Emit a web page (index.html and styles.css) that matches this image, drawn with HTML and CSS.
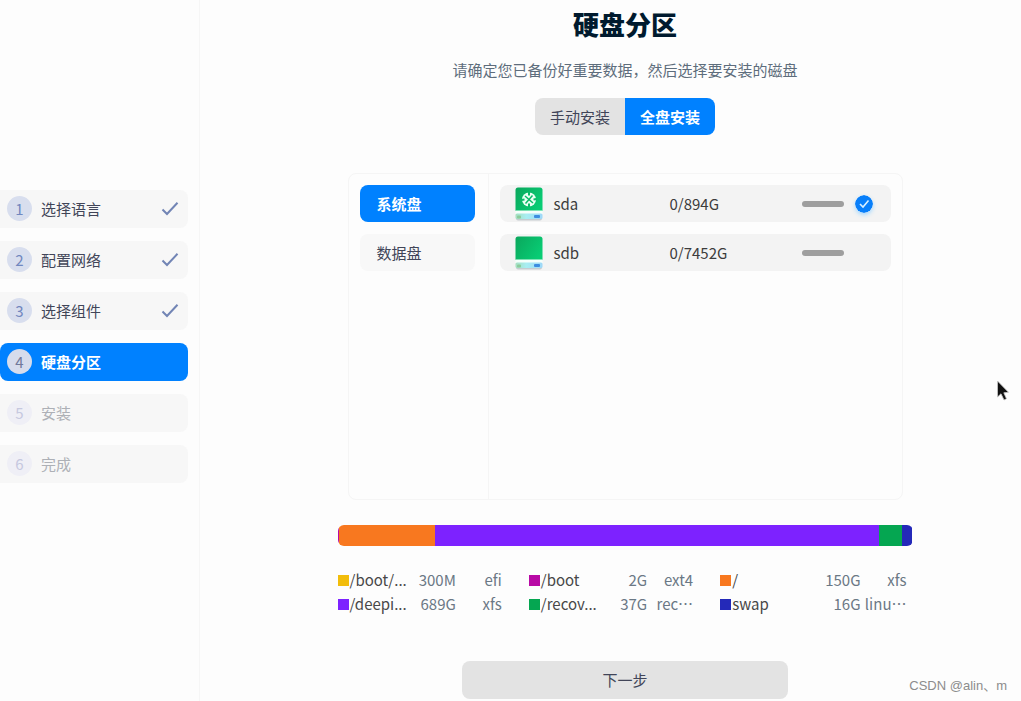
FILE: index.html
```html
<!DOCTYPE html>
<html lang="zh-CN">
<head>
<meta charset="utf-8">
<meta name="viewport" content="width=device-width, initial-scale=1">
<title>硬盘分区</title>
<link rel="stylesheet" href="styles.css">
</head>
<body>
<div class="installer">
  <nav class="sidebar" aria-label="安装步骤">
    <ol class="steps">
      <li class="step step-done"><span class="step-number">1</span><span class="step-label">选择语言</span><svg class="step-tick" viewBox="0 0 18 16" aria-hidden="true"><path d="M1.500 8.500 L6 13 L16.500 1.800"/></svg></li>
      <li class="step step-done"><span class="step-number">2</span><span class="step-label">配置网络</span><svg class="step-tick" viewBox="0 0 18 16" aria-hidden="true"><path d="M1.500 8.500 L6 13 L16.500 1.800"/></svg></li>
      <li class="step step-done"><span class="step-number">3</span><span class="step-label">选择组件</span><svg class="step-tick" viewBox="0 0 18 16" aria-hidden="true"><path d="M1.500 8.500 L6 13 L16.500 1.800"/></svg></li>
      <li class="step step-current" aria-current="step"><span class="step-number">4</span><span class="step-label">硬盘分区</span></li>
      <li class="step step-pending"><span class="step-number">5</span><span class="step-label">安装</span></li>
      <li class="step step-pending"><span class="step-number">6</span><span class="step-label">完成</span></li>
    </ol>
  </nav>

  <main class="content">
    <h1 class="title">硬盘分区</h1>
    <p class="subtitle">请确定您已备份好重要数据，然后选择要安装的磁盘</p>
    <div class="mode-switch">
      <button class="mode" type="button" aria-pressed="false">手动安装</button>
      <button class="mode mode-active" type="button" aria-pressed="true">全盘安装</button>
    </div>

    <section class="disk-panel">
      <div class="disk-kinds">
        <button class="kind kind-active" type="button">系统盘</button>
        <button class="kind" type="button">数据盘</button>
      </div>
      <div class="disk-list">
        <button class="disk" type="button" aria-pressed="true">
          <svg class="disk-icon" viewBox="0 0 28 34" aria-hidden="true">
            <defs>
              <linearGradient id="case" x1="0" y1="0" x2="1" y2="0.6"><stop offset="0" stop-color="#0aa75c"/><stop offset="1" stop-color="#08cc74"/></linearGradient>
              <linearGradient id="base" x1="0" y1="0" x2="1" y2="0"><stop offset="0" stop-color="#a5dfc0"/><stop offset="0.4" stop-color="#a8eef2"/><stop offset="1" stop-color="#9ed8f8"/></linearGradient>
            </defs>
            <rect x="1" y="27" width="26" height="6.500" rx="2" fill="#c5ccd0"/>
            <path d="M3 0.500 H25 Q27.500 0.500 27.500 3 V24 H0.500 V3 Q0.500 0.500 3 0.500Z" fill="url(#case)"/>
            <rect x="0.500" y="23.500" width="27" height="3.500" fill="#f5fffb"/>
            <rect x="0.500" y="26.500" width="27" height="5.500" rx="1.500" fill="url(#base)"/>
            <rect x="2" y="28.500" width="4" height="3" rx="1" fill="#8ccb9a"/>
            <rect x="19" y="28" width="6" height="3" rx="1" fill="#3d8de0"/>
            <circle cx="14" cy="12.500" r="7" fill="#e9fff3"/>
            <path d="M10 9 L18 16 M17.500 8.500 L10.500 16.500" stroke="#0abb68" stroke-width="1.500"/>
            <path d="M14 5 V8.500 M14 16.500 V20 M6.500 13 L9.500 12.500 M18.500 12.500 L21.500 12" stroke="#0abb68" stroke-width="2"/>
          </svg>
          <span class="disk-name">sda</span>
          <span class="disk-size">0/894G</span>
          <span class="disk-usage"></span>
          <svg class="disk-check" viewBox="0 0 18 18" aria-hidden="true"><circle cx="9" cy="9" r="9" fill="#087ffa"/><path d="M5 9 L8 12 L13.500 5.500" fill="none" stroke="#d9f0ff" stroke-width="1.600"/></svg>
        </button>
        <button class="disk" type="button" aria-pressed="false">
          <svg class="disk-icon" viewBox="0 0 28 34" aria-hidden="true">
            <rect x="1" y="27" width="26" height="6.500" rx="2" fill="#c5ccd0"/>
            <path d="M3 0.500 H25 Q27.500 0.500 27.500 3 V24 H0.500 V3 Q0.500 0.500 3 0.500Z" fill="url(#case)"/>
            <rect x="0.500" y="23.500" width="27" height="3.500" fill="#f5fffb"/>
            <rect x="0.500" y="26.500" width="27" height="5.500" rx="1.500" fill="url(#base)"/>
            <rect x="2" y="28.500" width="4" height="3" rx="1" fill="#8ccb9a"/>
            <rect x="19" y="28" width="6" height="3" rx="1" fill="#3d8de0"/>
          </svg>
          <span class="disk-name">sdb</span>
          <span class="disk-size">0/7452G</span>
          <span class="disk-usage"></span>
        </button>
      </div>
    </section>

    <div class="partition-bar">
      <span class="magenta" style="width:0.3%"></span>
      <span class="orange" style="width:16.7%"></span>
      <span class="purple" style="width:77.1%"></span>
      <span class="green" style="width:4.1%"></span>
      <span class="blue" style="width:1.8%"></span>
    </div>
    <ul class="legend">
      <li class="part"><i class="swatch yellow"></i><span class="part-name">/boot/...</span><span class="part-size">300M</span><span class="part-type">efi</span></li>
      <li class="part"><i class="swatch magenta"></i><span class="part-name">/boot</span><span class="part-size">2G</span><span class="part-type">ext4</span></li>
      <li class="part"><i class="swatch orange"></i><span class="part-name">/</span><span class="part-size">150G</span><span class="part-type">xfs</span></li>
      <li class="part"><i class="swatch purple"></i><span class="part-name">/deepi...</span><span class="part-size">689G</span><span class="part-type">xfs</span></li>
      <li class="part"><i class="swatch green"></i><span class="part-name">/recov...</span><span class="part-size">37G</span><span class="part-type">rec⋯</span></li>
      <li class="part"><i class="swatch blue"></i><span class="part-name">swap</span><span class="part-size">16G</span><span class="part-type">linu⋯</span></li>
    </ul>
    <button class="next" type="button">下一步</button>
  </main>
</div>
<svg class="pointer" viewBox="0 0 14 22" aria-hidden="true"><path d="M1.500 1 V17 L5 13.800 L8 20 L10.500 18.800 L7.800 12.800 L12.500 12.300Z" fill="#111" stroke="#c8c8c8" stroke-width="0.800"/></svg>
<span class="watermark">CSDN @alin、m</span>
</body>
</html>
```

FILE: styles.css
```css
* {
  box-sizing: border-box;
}

body {
  margin: 0;
  background: #fdfdfd;
  color: #414558;
  font: 15px/22px "Noto Sans CJK SC", sans-serif;
}

button {
  margin: 0;
  padding: 0;
  border: 0;
  color: inherit;
  font: inherit;
  cursor: pointer;
}

.installer {
  display: grid;
  grid-template-columns: 200px 1fr;
  min-height: 100vh;
}

/* Steps */
.sidebar {
  display: flex;
  flex-direction: column;
  justify-content: center;
  padding: 0 11px 29px 0;
  border-right: 1px solid #f6f6f6;
}

.steps {
  display: grid;
  gap: 13px;
  margin: 0;
  padding: 0;
  list-style: none;
}

.step {
  display: flex;
  align-items: center;
  gap: 9px;
  height: 38px;
  padding: 0 9px 0 7px;
  border-radius: 0 8px 8px 0;
  background: #f7f7f7;
}

.step-number {
  width: 25px;
  height: 25px;
  border-radius: 50%;
  background: #d8deee;
  color: #7187bf;
  line-height: 25px;
  text-align: center;
}

.step-label {
  flex: 1;
}

.step-tick {
  width: 18px;
  height: 16px;
  fill: none;
  stroke: #7285b5;
  stroke-width: 2;
}

.step-current {
  border-radius: 8px;
  background: #0081ff;
  color: #fff;
  font-weight: 700;
}

.step-current .step-number {
  background: #d6dcec;
  color: #71799a;
  font-weight: 400;
}

.step-pending {
  color: #adb0b6;
}

.step-pending .step-number {
  background: #efeff6;
  color: #c6c8df;
}

/* Main column */
.content {
  display: flex;
  flex-direction: column;
  align-items: center;
  padding: 5px 0 2px 29px;
}

.title {
  margin: 0;
  color: #001a2e;
  font-size: 26px;
  line-height: 38px;
  font-weight: 900;
}

.subtitle {
  margin: 16px 0 17px;
  color: #5e6d7c;
}

.mode-switch {
  display: grid;
  grid-template-columns: 1fr 1fr;
  width: 180px;
  height: 37px;
  border-radius: 8px;
  overflow: hidden;
}

.mode {
  background: #e3e3e3;
}

.mode-active {
  background: #0081ff;
  color: #fff;
  font-weight: 700;
}

/* Disk selection */
.disk-panel {
  display: grid;
  grid-template-columns: 140px 1fr;
  flex: 1;
  width: 100%;
  max-width: 555px;
  margin-top: 38px;
  border: 1px solid #f5f5f5;
  border-radius: 8px;
}

.disk-kinds,
.disk-list {
  display: grid;
  align-content: start;
  gap: 12px;
  padding: 11px;
}

.disk-kinds {
  padding-right: 13px;
  border-right: 1px solid #f5f5f5;
}

.kind {
  height: 37px;
  padding-left: 17px;
  border-radius: 8px;
  background: #f8f8f8;
  text-align: left;
}

.kind-active {
  background: #0081ff;
  color: #fff;
  font-weight: 700;
}

.disk {
  display: grid;
  grid-template-columns: 28px 105px 1fr 42px 18px;
  column-gap: 11px;
  align-items: center;
  height: 37px;
  padding: 0 18px 0 15px;
  border-radius: 8px;
  background: #f3f3f3;
  color: #3c3c3c;
  text-align: left;
}

.disk-icon {
  width: 28px;
  height: 34px;
}

.disk-usage {
  height: 6px;
  border-radius: 3px;
  background: #9e9e9e;
}

.disk-check {
  width: 18px;
  height: 18px;
  border-radius: 50%;
  box-shadow: 0 2px 4px #a5d8ff;
}

/* Partition preview */
.partition-bar {
  display: flex;
  width: 100%;
  max-width: 575px;
  height: 21px;
  margin-top: 25px;
  border-radius: 6px;
  overflow: hidden;
}

.legend {
  display: grid;
  grid-template-columns: 164fr 164fr 186fr;
  column-gap: 27px;
  width: 100%;
  max-width: 575px;
  margin: 22px 0 0;
  padding: 0 6px 0 0;
  list-style: none;
  line-height: 24px;
}

.part {
  display: grid;
  grid-template-columns: 11px 1fr auto 45px;
  align-items: center;
  column-gap: 1px;
  color: #6b7885;
}

.part-name {
  color: #484848;
}

.part-type {
  text-align: right;
}

.swatch {
  width: 11px;
  height: 11px;
}

.yellow { background: #f2bd0b; }
.magenta { background: #b80aa5; }
.orange { background: #f8781f; }
.purple { background: #7d22ff; }
.green { background: #05a651; }
.blue { background: #2429b9; }

.next {
  width: 100%;
  max-width: 326px;
  height: 38px;
  margin-top: 45px;
  border-radius: 8px;
  background: #e3e3e3;
}

/* Overlays */
.pointer {
  position: absolute;
  top: 380px;
  left: 996px;
  width: 14px;
  height: 22px;
}

.watermark {
  position: absolute;
  right: 14px;
  bottom: 5px;
  color: #8c8c8c;
  font: 13px/20px "Liberation Sans", "Noto Sans CJK SC", sans-serif;
}
```
